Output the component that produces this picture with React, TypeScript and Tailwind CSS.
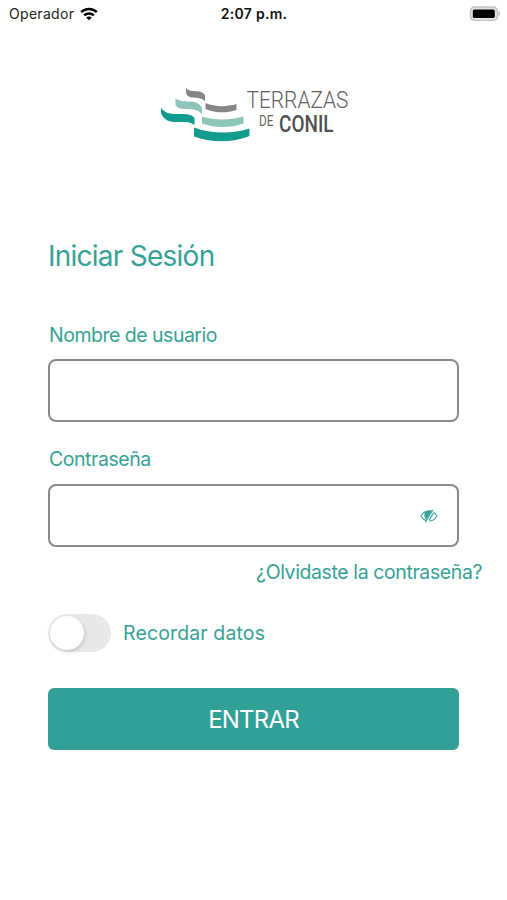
import React, { useState } from 'react';

function StatusBar() {
  return (
    <header className="grid h-7 grid-cols-3 items-center pr-[6px] pl-[9px] text-black">
      <div className="flex items-center gap-[5px]">
        <span className="text-[14px] leading-5 tracking-[0.3px] text-[#222]">Operador</span>
        <svg viewBox="0 0 20 15" className="h-[14px] w-5 shrink-0" fill="none" stroke="#000" strokeWidth="2.6">
          <path d="M1.6 5.6C6.3 .9 13.7 .9 18.4 5.6" />
          <path d="M4.8 9C7.7 6.2 12.3 6.2 15.2 9" />
          <path d="M10 14.2 7 11.2C8.7 9.7 11.3 9.7 13 11.2Z" fill="#000" stroke="none" />
        </svg>
      </div>
      <span className="-ml-[2px] text-center text-[14px] leading-5 font-semibold tracking-[0.3px] text-[#111]">2:07 p.m.</span>
      <svg viewBox="0 0 32 16" className="h-4 w-8 justify-self-end">
        <rect x="1.4" y="1" width="27" height="13.4" rx="4.2" fill="#e4e4e4" stroke="#c2c2c2" strokeWidth="1.4" />
        <rect x="3.8" y="3.4" width="22" height="8.6" rx="1.6" fill="#000" />
        <path d="M29.4 5.2C31.6 6.2 31.6 9.2 29.4 10.2Z" fill="#c2c2c2" />
      </svg>
    </header>
  );
}

function Logo() {
  return (
    <svg viewBox="0 0 197 66" className="mx-auto h-[66px] w-[197px] overflow-visible" role="img" aria-label="Terrazas de Conil">
      {/* Upper terrace */}
      <path d="M31 8C36 14 45 8 50 15V21C43 15 34 21 31 13Z" fill="#868686" />
      <path d="M50.5 23C60 27 71 27 81.5 24V30C71 33.5 60 33 50.5 29Z" fill="#868686" />
      {/* Middle terrace */}
      <path d="M20.5 18C27 25 42 17 47 28V34C39 25 25 33 20.5 25Z" fill="#8ec5b9" />
      <path d="M47 36.5C60 40.5 75 40.5 88.5 36.5V43.5C75 48.5 60 48 47 43.5Z" fill="#8ec5b9" />
      {/* Lower terrace */}
      <path d="M6 27.5C14 40 32 29 39.5 38V45C30 37 12 49 6 33Z" fill="#129c90" />
      <path d="M39 47.5C56 54 78 54 94.5 48.5V56C78 63 56 63 39 56.5Z" fill="#129c90" />
      <g className="font-['Roboto',sans-serif]">
        <text x="91.5" y="27.5" fontSize="23.5" fontWeight="300" fill="#606060" textLength="102" lengthAdjust="spacingAndGlyphs">TERRAZAS</text>
        <text x="104" y="45.5" fontSize="14" fill="#666" textLength="14.5" lengthAdjust="spacingAndGlyphs">DE</text>
        <text x="124" y="52" fontSize="23.5" fontWeight="500" fill="#505050" textLength="54.5" lengthAdjust="spacingAndGlyphs">CONIL</text>
      </g>
    </svg>
  );
}

function HiddenEyeIcon() {
  return (
    <svg viewBox="0 0 18 14" className="h-[14px] w-[18px]" fill="none" stroke="#36a398" strokeWidth="1.1" strokeLinecap="round">
      <path d="M9 2C5.500 2 2.700 4 1 7c1 2 2.600 3.600 4.600 4.400" />
      <path d="M14 3.700C15.300 4.500 16.300 5.700 17 7c-1.700 3.100-4.300 4.800-7.500 5" />
      <path d="M5.200 3.600C4.600 5.600 4.800 8 6 10L11.200 1.800C9.200 1.600 7 2.200 5.200 3.600Z" fill="#36a398" />
      <path d="M5.600 12.800 12.600 1.400M9.200 10.600 13.200 4.600" />
    </svg>
  );
}

export default function App() {
  const [username, setUsername] = useState('');
  const [password, setPassword] = useState('');
  const [visible, setVisible] = useState(false);
  const [remember, setRemember] = useState(false);

  return (
    <div className="min-h-[900px] bg-white font-['Inter','Liberation_Sans',sans-serif] text-[#36a295]">
      <StatusBar />

      <div className="pt-[52px]">
        <Logo />
      </div>

      <form className="flex flex-col px-12 pt-[90px]" onSubmit={(e) => e.preventDefault()}>
        <h1 className="text-[28px] leading-10 tracking-[-0.75px]">Iniciar Sesión</h1>

        <label htmlFor="username" className="mt-[45px] pl-px text-[19.5px] leading-7 tracking-[-0.5px]">Nombre de usuario</label>
        <input
          id="username"
          value={username}
          onChange={(e) => setUsername(e.target.value)}
          className="mt-[10px] h-[63px] rounded-lg border-2 border-[#8a8a8a] px-4 text-lg outline-none"
        />

        <label htmlFor="password" className="mt-[23px] pl-px text-[19.5px] leading-7 tracking-[-0.45px]">Contraseña</label>
        <div className="mt-[11px] flex h-[63px] items-center rounded-lg border-2 border-[#8a8a8a] pr-[19px] pl-4">
          <input
            id="password"
            type={visible ? 'text' : 'password'}
            value={password}
            onChange={(e) => setPassword(e.target.value)}
            className="min-w-0 flex-1 text-lg outline-none"
          />
          <button type="button" aria-label="Mostrar contraseña" onClick={() => setVisible(!visible)}>
            <HiddenEyeIcon />
          </button>
        </div>

        <a href="#" className="mt-[11px] -mr-[23px] self-end text-[19.5px] leading-7 tracking-[-0.4px] whitespace-nowrap">¿Olvidaste la contraseña?</a>

        <div className="mt-[28px] flex items-center gap-3">
          <button
            type="button"
            role="switch"
            aria-checked={remember}
            aria-label="Recordar datos"
            onClick={() => setRemember(!remember)}
            className={`flex h-[38px] w-[63px] items-center rounded-full p-[2px] ${remember ? 'justify-end bg-[#31a198]' : 'bg-[#e8e8ea]'}`}
          >
            <span className="size-[34px] rounded-full bg-white shadow-[1px_2px_4px_rgba(0,0,0,0.14)]" />
          </button>
          <span className="text-[19.5px] leading-7 tracking-[0.13px]">Recordar datos</span>
        </div>

        <button type="submit" className="mt-9 h-[62px] rounded-md bg-[#31a198] pt-[2px] text-[24px] tracking-[-0.8px] text-white">
          ENTRAR
        </button>
      </form>
    </div>
  );
}
